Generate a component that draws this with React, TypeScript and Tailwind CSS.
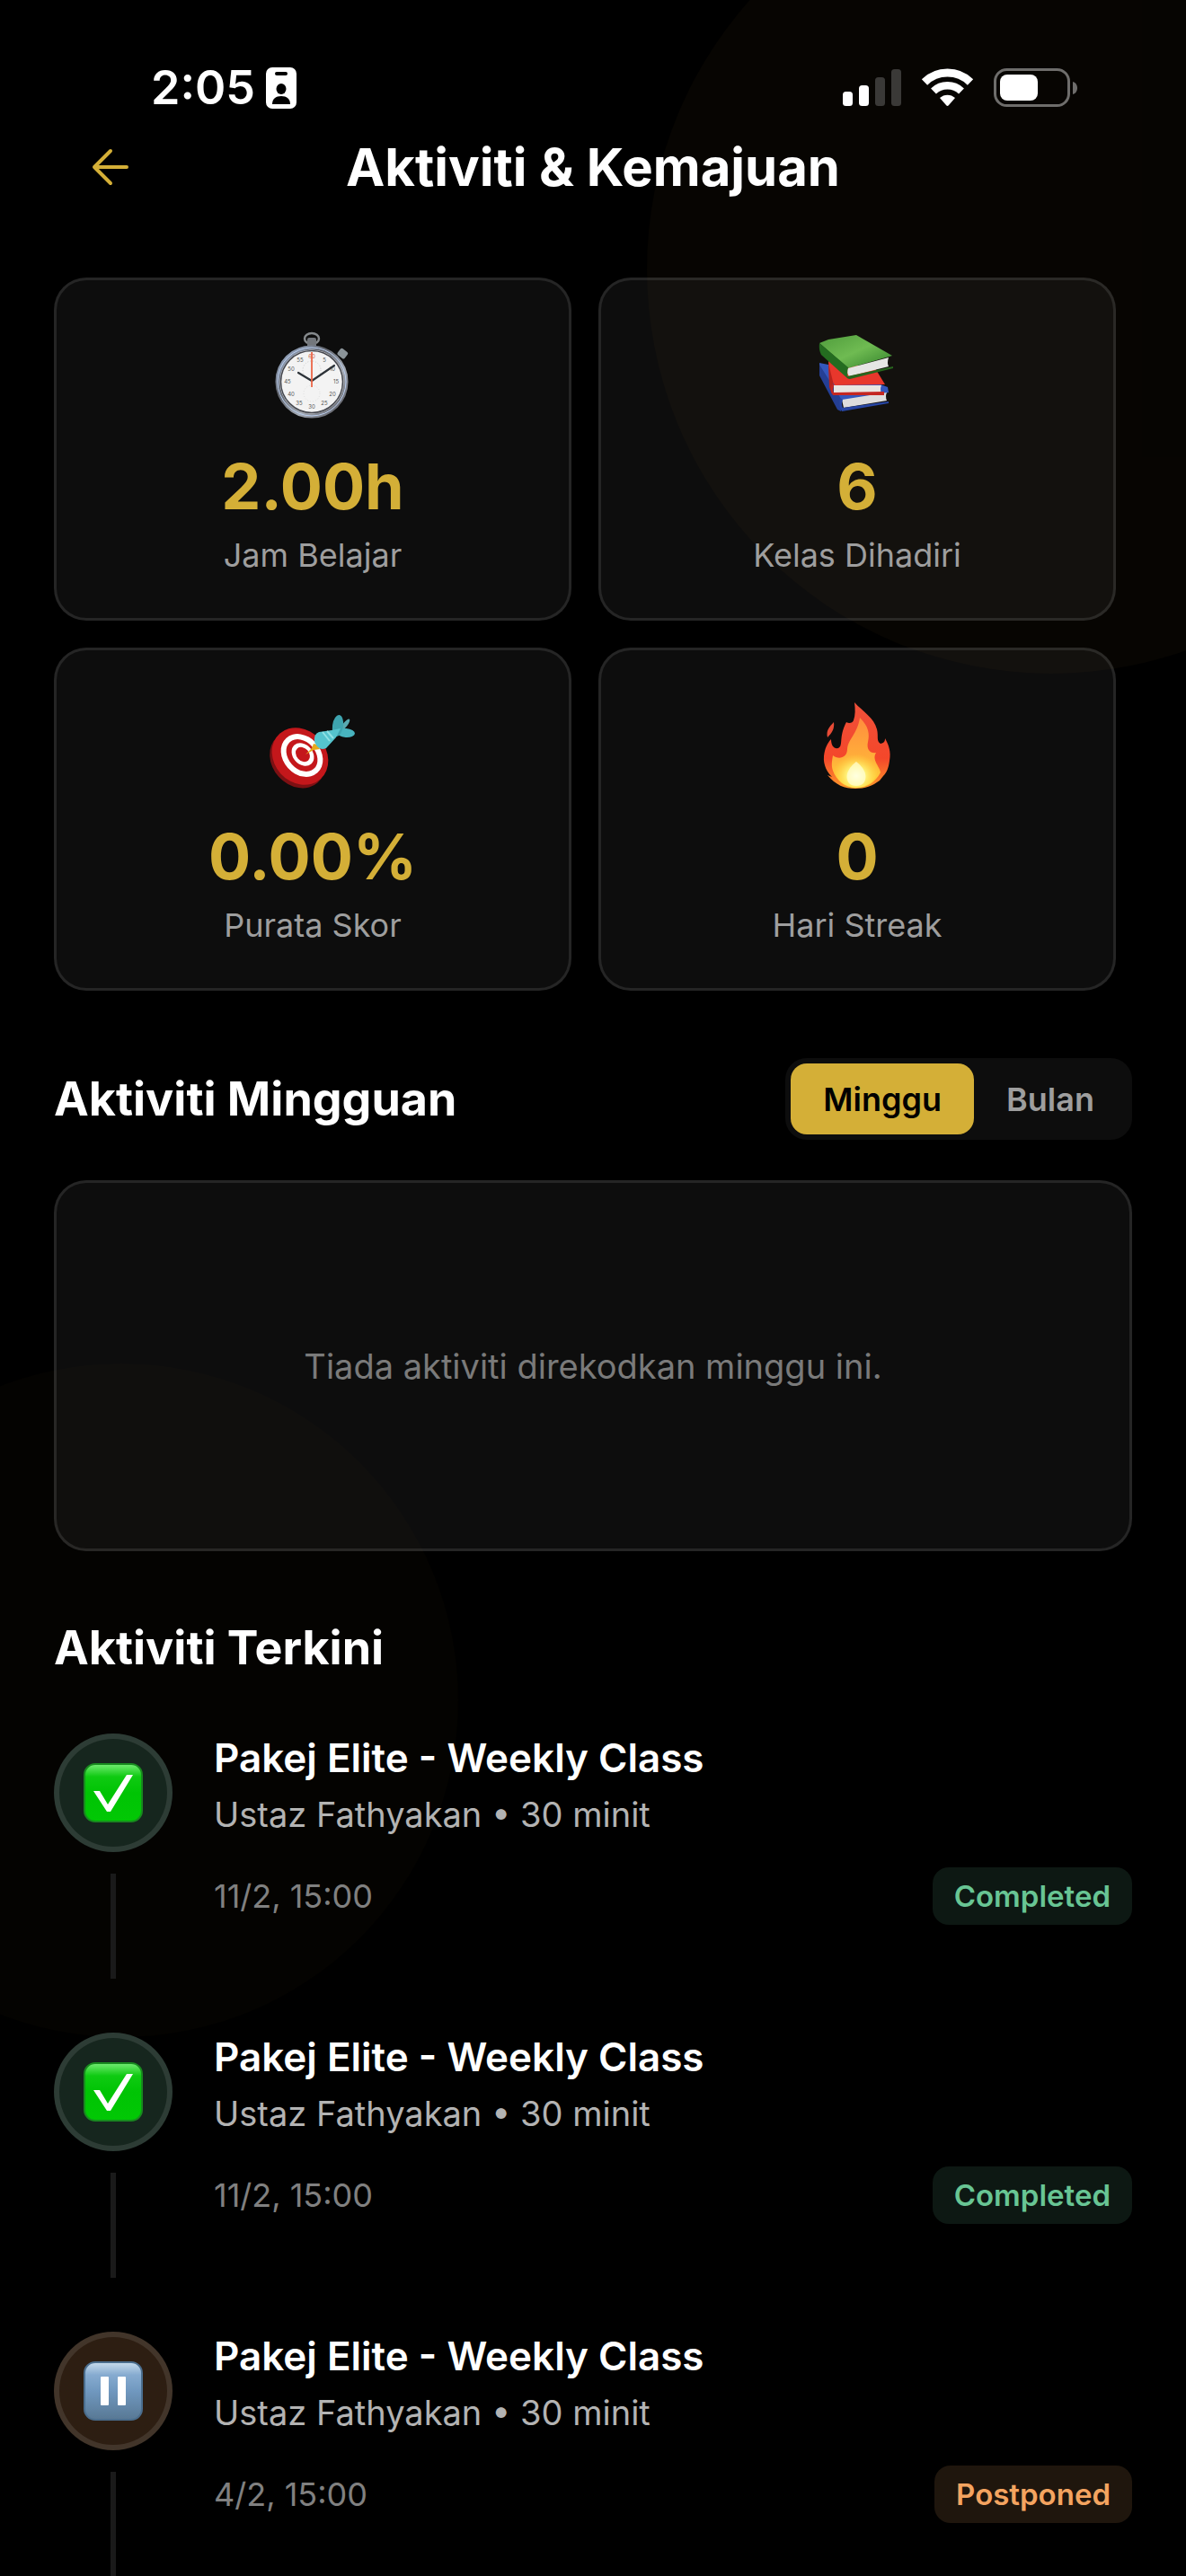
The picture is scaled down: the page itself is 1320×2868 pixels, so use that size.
import { useState } from "react";

function IdBadge() {
  return (
    <svg viewBox="0 0 34 46" className="w-[34px] h-[46px]" aria-hidden="true">
      <rect width="34" height="46" rx="7" fill="#fff" />
      <rect x="10" y="5" width="14" height="4" rx="2" fill="#000" />
      <ellipse cx="17" cy="24" rx="5.500" ry="6" fill="#000" />
      <path d="M7 41c0-6 4-9 10-9s10 3 10 9z" fill="#000" />
    </svg>
  );
}

function StatusIcons() {
  return (
    <svg viewBox="0 0 262 44" className="w-[262px] h-[44px]" role="img" aria-label="Signal, Wi-Fi, battery">
      <rect x="0" y="26" width="11" height="16" rx="3.500" fill="#fff" />
      <rect x="18" y="19" width="11" height="23" rx="3.500" fill="#fff" />
      <rect x="36" y="10" width="11" height="32" rx="3.500" fill="#3a3937" />
      <rect x="54" y="1" width="11" height="41" rx="3.500" fill="#3a3937" />
      <g fill="none" stroke="#fff">
        <path d="M91 15.500a36.500 36.500 0 0 1 51 0" strokeWidth="9" />
        <path d="M101 25.500a22.500 22.500 0 0 1 31 0" strokeWidth="8.500" />
      </g>
      <path d="M108 33a12.500 12.500 0 0 1 17 0l-7.200 8.200a1.800 1.800 0 0 1-2.600 0z" fill="#fff" />
      <rect x="169.500" y="1.500" width="82" height="40" rx="13" fill="none" stroke="#6e6d6b" strokeWidth="3" />
      <rect x="175" y="7" width="42" height="29" rx="8" fill="#fff" />
      <path d="M256 15c3.500 1 5 4 5 7s-1.500 6-5 7z" fill="#6e6d6b" />
    </svg>
  );
}

function Stopwatch() {
  return (
    <svg viewBox="-2 0 140 130" className="w-[140px] h-[130px]" aria-hidden="true">
      <defs>
        <linearGradient id="rim" x1="0" y1="0" x2="1" y2="1">
          <stop offset="0" stopColor="#a9bddc" />
          <stop offset=".35" stopColor="#62666e" />
          <stop offset=".65" stopColor="#a5abb5" />
          <stop offset="1" stopColor="#4b4b52" />
        </linearGradient>
      </defs>
      <ellipse cx="67" cy="27" rx="8" ry="6" fill="none" stroke="#85898c" strokeWidth="2.500" />
      <rect x="62" y="26" width="10" height="11" rx="2" fill="#73777c" />
      <rect x="-5" y="-5" width="10" height="9" rx="2" fill="#8b9499" transform="translate(101 44) rotate(38)" />
      <circle cx="67" cy="75" r="38" fill="#f3f3f3" stroke="url(#rim)" strokeWidth="5" />
      <circle cx="67" cy="75" r="34.500" fill="none" stroke="#45474e" strokeWidth="1.500" />
      <circle cx="67" cy="75" r="38" fill="none" stroke="#b9cdee" strokeWidth="1" />
      <circle cx="67" cy="62" r="10" fill="none" stroke="#c9c9c9" strokeWidth="1" strokeDasharray="1 2" />
      <circle cx="67" cy="88" r="9" fill="none" stroke="#dedede" strokeWidth="1" strokeDasharray="1 2" />
      <g fill="#555" fontSize="6" fontFamily="Inter, sans-serif" textAnchor="middle">
        <text x="67" y="49" fill="#c65b48">60</text>
        <text x="81" y="53">5</text>
        <text x="90" y="63">10</text>
        <text x="94" y="77">15</text>
        <text x="90" y="91">20</text>
        <text x="81" y="101">25</text>
        <text x="67" y="105">30</text>
        <text x="53" y="101">35</text>
        <text x="44" y="91">40</text>
        <text x="40" y="77">45</text>
        <text x="44" y="63">50</text>
        <text x="54" y="53">55</text>
      </g>
      <path d="M67 74L52 65M67 74L92 57" stroke="#2c3238" strokeWidth="2.200" strokeLinecap="round" />
      <path d="M67 42v39" stroke="#ec6648" strokeWidth="1.800" />
    </svg>
  );
}

function Books() {
  return (
    <svg viewBox="4 0 140 130" className="w-[140px] h-[130px]" aria-hidden="true">
      <defs>
        <linearGradient id="green" x1="0" y1="0" x2="1" y2="1">
          <stop offset="0" stopColor="#4f9c3c" />
          <stop offset=".5" stopColor="#6fbb52" />
          <stop offset="1" stopColor="#31802a" />
        </linearGradient>
      </defs>
      {/* blue */}
      <path d="M32 54l10 2 66 25 1 6-52 10-25-32z" fill="#3457bd" />
      <path d="M32 56l24 38v14l-4-2-20-38z" fill="#243f95" />
      <path d="M57 95l50-8q-2 4 0 9l-48 8z" fill="#dedede" />
      <path d="M55 93l3 2q-2 5 0 9l51-7v2l-52 9q-4-6-2-15z" fill="#2746a4" />
      {/* red */}
      <path d="M42 52l52 8 11 18-56 1-6-10z" fill="#e8372c" />
      <path d="M42 54l6 25-2 10-3-8z" fill="#b6231e" />
      <path d="M48 79l53 0q-2 4 0 9l-53 0z" fill="#e9e5e2" />
      <path d="M46 78h2q-2 5 0 9l56-1v4l-57 0q-4-6-1-12z" fill="#c42722" />
      {/* green */}
      <path d="M32 32l10-4 31-5 40 23-49 14z" fill="url(#green)" />
      <path d="M32 32l32 27-1 12-29-26q-3-6-2-13z" fill="#246c20" />
      <path d="M64 60l45-12q-2 6 0 10l-44 11q-3-4-1-9z" fill="#e6e6e4" />
      <path d="M63 69l51-11v2l-48 12q-4 0-3-3z" fill="#27651e" />
    </svg>
  );
}

function Target() {
  return (
    <svg viewBox="-2 -8 140 130" className="w-[140px] h-[130px]" aria-hidden="true">
      <ellipse cx="51" cy="76" rx="28" ry="34" transform="rotate(-42 51 76)" fill="#7d1013" />
      <ellipse cx="54" cy="72" rx="29" ry="34" transform="rotate(-42 54 72)" fill="#c4171b" />
      <ellipse cx="56" cy="71" rx="21" ry="26" transform="rotate(-42 56 71)" fill="#fff" />
      <ellipse cx="56" cy="71" rx="15" ry="20" transform="rotate(-42 56 71)" fill="#c4171b" />
      <ellipse cx="57" cy="70" rx="11" ry="14" transform="rotate(-42 57 70)" fill="#fff" />
      <ellipse cx="57" cy="70" rx="7" ry="9" transform="rotate(-42 57 70)" fill="#c4171b" />
      <path d="M60 70l7-7 2-5 4 1 3 5-7 1z" fill="#e6a91c" />
      {/* dart */}
      <ellipse cx="104" cy="37" rx="2.500" ry="8" transform="rotate(38 104 37)" fill="#58a9b0" />
      <ellipse cx="105" cy="46" rx="10" ry="5" transform="rotate(4 105 46)" fill="#48b3be" />
      <ellipse cx="96" cy="38" rx="6" ry="12" transform="rotate(8 96 38)" fill="#3ea4af" />
      <path d="M70 56q-1-9 5-11l14-2 10-2-5 10-11 12q-8 4-13-7z" fill="#55c4ce" />
      <path d="M79 45l8 10M84 44l7 8" stroke="#91e2e5" strokeWidth="2" fill="none" />
    </svg>
  );
}

function Fire() {
  return (
    <svg viewBox="4 -8 140 130" className="w-[140px] h-[130px]" aria-hidden="true">
      <defs>
        <linearGradient id="flame" x1="0" y1="0" x2="0" y2="1">
          <stop offset="0" stopColor="#f0503a" />
          <stop offset=".65" stopColor="#f4472a" />
          <stop offset="1" stopColor="#ff9a2b" />
        </linearGradient>
        <linearGradient id="inner" x1="0" y1="0" x2="0" y2="1">
          <stop offset="0" stopColor="#ff8d3d" />
          <stop offset=".6" stopColor="#ffb03a" />
          <stop offset="1" stopColor="#ffd93a" />
        </linearGradient>
        <radialGradient id="core" cx=".5" cy=".7" r=".55">
          <stop offset="0" stopColor="#fffff0" />
          <stop offset=".4" stopColor="#fff27a" />
          <stop offset="1" stopColor="#ffd83c" stopOpacity="0" />
        </radialGradient>
      </defs>
      <path d="M71 12c9 10 22 17 25 30 2 8-1 13 4 16 5-1 5-4 5-6 4 7 7 15 5 25-1 8-3 13-7 17l-4 5c-8 6-16 9-27 9-12 0-22-4-31-15l5 2c-5-5-10-13-9-23 1-9 4-15 8-19 0 7 3 11 8 10 6-3 0-12 9-29 3 2 7 1 8-2 2-6 2-12 1-20z" fill="url(#flame)" />
      <path d="M48 34c1 7-2 12-7 17-2-7 2-12 7-17z" fill="#e84b36" />
      <path d="M77 29c10 10 11 18 9 27-2 9 3 13 9 12-5 8 4 15 5 22-6 11-15 17-27 17-13 0-22-8-26-19-2-6-1-11 0-17 6 5 16 3 16-7 1-12 11-16 14-35z" fill="url(#inner)" />
      <ellipse cx="73" cy="85" rx="24" ry="22" fill="url(#core)" />
      <path d="M73 78c8 6 14 16 8 24-3 4-13 4-16 0-6-8 0-18 8-24z" fill="#ffffd8" opacity=".7" />
    </svg>
  );
}

function TileIcon({ kind }: { kind: "check" | "pause" }) {
  const isCheck = kind === "check";
  return (
    <svg viewBox="0 0 66 66" className="w-[66px] h-[66px]" aria-hidden="true">
      <defs>
        <linearGradient id={"tile-" + kind} x1="0" y1="0" x2="0" y2="1">
          <stop offset="0" stopColor={isCheck ? "#74ec74" : "#c8dcec"} />
          <stop offset=".22" stopColor={isCheck ? "#0fca12" : "#86abd0"} />
          <stop offset=".5" stopColor={isCheck ? "#00c404" : "#7098bf"} />
          <stop offset="1" stopColor={isCheck ? "#02c805" : "#587894"} />
        </linearGradient>
      </defs>
      <rect x="1" y="1" width="64" height="64" rx="12" fill={"url(#tile-" + kind + ")"} stroke={isCheck ? "#188a1f" : "#4a6d8d"} strokeWidth="2" />
      {isCheck ? (
        <path d="M11 31h7l9 15 21-33h7L30 54h-4z" fill="#fff" />
      ) : (
        <path d="M20 17h7q1 0 1 1v30q0 1-1 1h-7q-1 0-1-1V18q0-1 1-1zM39 17h7q1 0 1 1v30q0 1-1 1h-7q-1 0-1-1V18q0-1 1-1z" fill="#fff" />
      )}
    </svg>
  );
}

const stats = [
  { icon: <Stopwatch />, value: "2.00h", label: "Jam Belajar" },
  { icon: <Books />, value: "6", label: "Kelas Dihadiri" },
  { icon: <Target />, value: "0.00%", label: "Purata Skor" },
  { icon: <Fire />, value: "0", label: "Hari Streak" },
];

const activities = [
  { id: 1, date: "11/2, 15:00", status: "Completed" },
  { id: 2, date: "11/2, 15:00", status: "Completed" },
  { id: 3, date: "4/2, 15:00", status: "Postponed" },
];

export default function App() {
  const [range, setRange] = useState("Minggu");

  return (
    <div className="relative h-screen overflow-hidden bg-black text-white font-[Inter,sans-serif]">
      {/* background glow */}
      <div className="absolute -top-[150px] -right-[300px] size-[900px] rounded-full bg-[#d4af37]/3"></div>
      <div className="absolute bottom-[600px] -left-[240px] size-[750px] rounded-full bg-[#d4af37]/2"></div>

      <div className="relative">
        {/* status bar */}
        <div className="flex items-center justify-between pt-[66px] pl-[168px] pr-[120px]">
          <div className="flex items-center gap-3">
            <span className="text-[52px] leading-[64px] font-semibold">2:05</span>
            <IdBadge />
          </div>
          <StatusIcons />
        </div>

        <header className="grid grid-cols-[126px_1fr_126px] items-center px-[60px] h-[112px]">
          <button type="button" aria-label="Kembali" className="flex items-center justify-center h-[100px]">
            <svg viewBox="0 0 42 42" className="size-[42px]" fill="none" stroke="#d4af37" strokeWidth="4" strokeLinecap="round" strokeLinejoin="round">
              <path d="M39 21H3M21 3L3 21l18 18" />
            </svg>
          </button>
          <h1 className="text-center text-[58px] leading-[72px] font-bold">Aktiviti &amp; Kemajuan</h1>
        </header>

        <main className="px-[60px] pt-[67px]">
          {/* stats */}
          <div className="flex flex-wrap gap-[30px]">
            {stats.map((item) => (
              <div key={item.label} className="flex flex-col items-center w-[48%] h-[382px] pt-[38px] rounded-[36px] border-3 border-white/10 bg-white/5">
                {item.icon}
                <div className="mt-4 text-[70px] leading-[92px] font-bold text-[#d4af37]">{item.value}</div>
                <div className="mt-2 text-[36px] leading-[44px] text-[#9e9e9e]">{item.label}</div>
              </div>
            ))}
          </div>

          <div className="flex items-center justify-between mt-[75px]">
            <h2 className="text-[52px] leading-[64px] font-bold">Aktiviti Mingguan</h2>
            <div className="flex p-1.5 rounded-[24px] bg-white/5">
              {["Minggu", "Bulan"].map((name) => (
                <button
                  key={name}
                  type="button"
                  aria-pressed={range === name}
                  onClick={() => setRange(name)}
                  className={`px-9 h-[79px] rounded-[18px] text-[36px] leading-[44px] font-semibold ${range === name ? "bg-[#d4af37] text-black" : "text-[#9e9e9e]"}`}
                >
                  {name}
                </button>
              ))}
            </div>
          </div>

          <div className="flex items-center justify-center mt-[45px] h-[413px] rounded-[36px] border-3 border-white/10 bg-white/5 text-[38px] leading-[48px] text-[#7a7a7a]">
            Tiada aktiviti direkodkan minggu ini.
          </div>

          <h2 className="mt-[76px] text-[52px] leading-[64px] font-bold">Aktiviti Terkini</h2>

          <ul className="mt-[63px]">
            {activities.map((item) => (
              <li key={item.id} className="flex gap-[46px] h-[333px]">
                <div className="flex flex-col items-center gap-6">
                  <div className={`flex items-center justify-center size-[132px] rounded-full border-6 border-white/10 ${item.status === "Completed" ? "bg-[#16261e]" : "bg-[#2d1e12]"}`}>
                    <TileIcon kind={item.status === "Completed" ? "check" : "pause"} />
                  </div>
                  <div className="w-1.5 h-[117px] bg-[#1a1a1a]"></div>
                </div>
                <div className="flex-1">
                  <h3 className="text-[44px] leading-[54px] font-semibold">Pakej Elite - Weekly Class</h3>
                  <p className="mt-3 text-[38px] leading-[48px] text-[#b3b3b3]">Ustaz Fathyakan • 30 minit</p>
                  <div className="flex items-center justify-between mt-[35px]">
                    <time className="text-[36px] leading-[44px] text-[#808080]">{item.date}</time>
                    <span className={`px-6 rounded-[18px] text-[33px] leading-[64px] font-semibold ${item.status === "Completed" ? "bg-[#0d1813] text-[#68c594]" : "bg-[#1f160d] text-[#f4a460]"}`}>
                      {item.status}
                    </span>
                  </div>
                </div>
              </li>
            ))}
          </ul>
        </main>
      </div>
    </div>
  );
}
